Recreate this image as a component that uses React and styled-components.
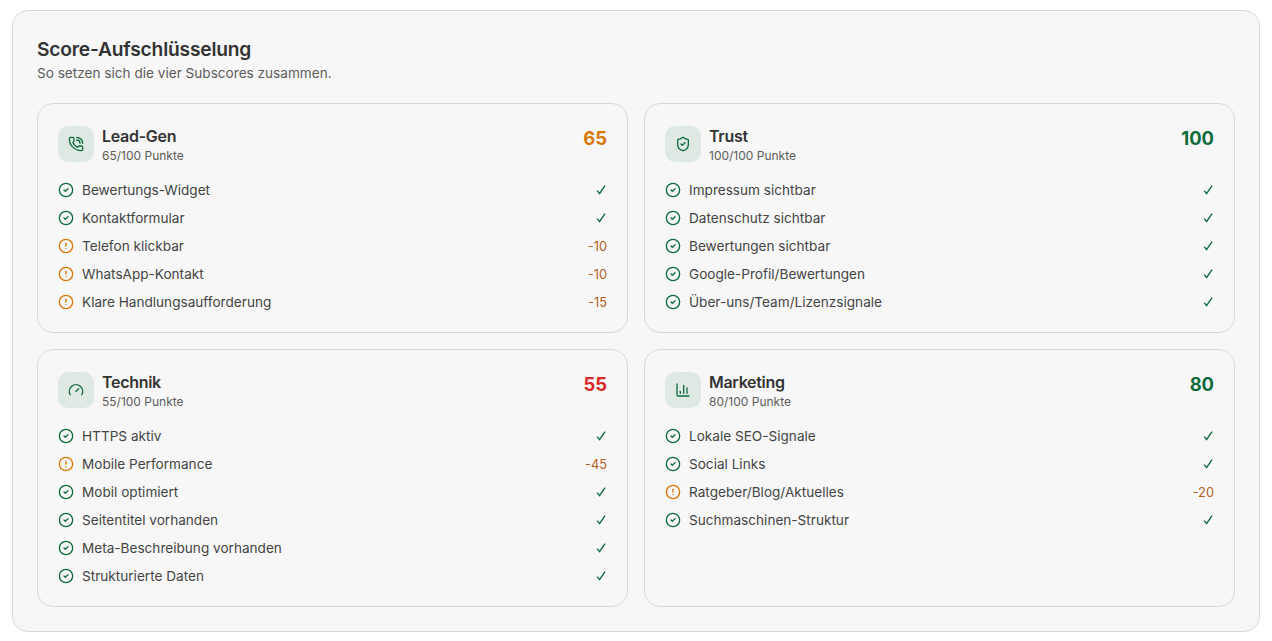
import React from "react";
import styled, { createGlobalStyle } from "styled-components";
import { ChartColumn, CircleAlert, CircleCheck, Gauge, PhoneCall, ShieldCheck } from "lucide-react";

const GREEN = "#0f6b3c";
const ORANGE = "#d97706";

const sections = [
  {
    name: "Lead-Gen",
    score: 65,
    color: ORANGE,
    icon: PhoneCall,
    items: [
      ["Bewertungs-Widget"],
      ["Kontaktformular"],
      ["Telefon klickbar", -10],
      ["WhatsApp-Kontakt", -10],
      ["Klare Handlungsaufforderung", -15],
    ],
  },
  {
    name: "Trust",
    score: 100,
    color: GREEN,
    icon: ShieldCheck,
    items: [
      ["Impressum sichtbar"],
      ["Datenschutz sichtbar"],
      ["Bewertungen sichtbar"],
      ["Google-Profil/Bewertungen"],
      ["Über-uns/Team/Lizenzsignale"],
    ],
  },
  {
    name: "Technik",
    score: 55,
    color: "#dc2626",
    icon: Gauge,
    items: [
      ["HTTPS aktiv"],
      ["Mobile Performance", -45],
      ["Mobil optimiert"],
      ["Seitentitel vorhanden"],
      ["Meta-Beschreibung vorhanden"],
      ["Strukturierte Daten"],
    ],
  },
  {
    name: "Marketing",
    score: 80,
    color: GREEN,
    icon: ChartColumn,
    items: [
      ["Lokale SEO-Signale"],
      ["Social Links"],
      ["Ratgeber/Blog/Aktuelles", -20],
      ["Suchmaschinen-Struktur"],
    ],
  },
];

const TickMark = () => (
  <svg width="12" height="12" viewBox="0 0 12 12" fill="none" stroke="currentColor" strokeWidth="1.4">
    <path d="M2.2 6.6 4.6 9.6 10 1.6" />
  </svg>
);

export default function App() {
  return (
    <>
      <GlobalStyle />
      <Panel>
        <Title>Score-Aufschlüsselung</Title>
        <Subtitle>So setzen sich die vier Subscores zusammen.</Subtitle>
        <Grid>
          {sections.map((section) => {
            const Icon = section.icon;
            return (
              <Card key={section.name}>
                <CardHeader>
                  <IconBox>
                    <Icon size={16} strokeWidth={2} />
                  </IconBox>
                  <Heading>
                    <CardName>{section.name}</CardName>
                    <Points>{section.score}/100 Punkte</Points>
                  </Heading>
                  <Score $color={section.color}>{section.score}</Score>
                </CardHeader>
                <List>
                  {section.items.map(([label, penalty]) => (
                    <Row key={label}>
                      <RowIcon $warn={penalty !== undefined}>
                        {penalty !== undefined ? (
                          <CircleAlert size={16} strokeWidth={2} />
                        ) : (
                          <CircleCheck size={16} strokeWidth={2} />
                        )}
                      </RowIcon>
                      <Label>{label}</Label>
                      {penalty !== undefined ? (
                        <Penalty>{penalty}</Penalty>
                      ) : (
                        <Tick>
                          <TickMark />
                        </Tick>
                      )}
                    </Row>
                  ))}
                </List>
              </Card>
            );
          })}
        </Grid>
      </Panel>
    </>
  );
}

const GlobalStyle = createGlobalStyle`
  html, body {
    margin: 0;
    background: #ffffff;
    font-family: Inter, "Liberation Sans", sans-serif;
    -webkit-font-smoothing: antialiased;
  }
`;
const Panel = styled.section`
  box-sizing: border-box;
  width: 1248px;
  height: 622px;
  margin: 10px 12px 0;
  padding: 24px;
  background: #f7f7f7;
  border: 1px solid #d9d9d9;
  border-radius: 16px;
`;
const Title = styled.h2`
  margin: 0;
  font-size: 19.2px;
  line-height: 28px;
  font-weight: 600;
  letter-spacing: -0.19px;
  color: #333333;
`;
const Subtitle = styled.p`
  margin: 0;
  font-size: 13.6px;
  line-height: 20px;
  color: #5c5c5c;
`;
const Grid = styled.div`
  display: grid;
  grid-template-columns: 1fr 1fr;
  gap: 16px;
  margin-top: 20px;
`;
const Card = styled.article`
  box-sizing: border-box;
  padding: 22px 20px 16px;
  background: #f7f7f7;
  border: 1px solid #d9d9d9;
  border-radius: 16px;
`;
const CardHeader = styled.header`
  display: flex;
  align-items: flex-start;
  gap: 8px;
  height: 36px;
  margin-bottom: 14px;
`;
const IconBox = styled.div`
  display: flex;
  flex: none;
  align-items: center;
  justify-content: center;
  width: 36px;
  height: 36px;
  border-radius: 10px;
  background: #dfe9e3;
  color: ${GREEN};
`;
const Heading = styled.div`
  flex: 1;
`;
const CardName = styled.div`
  font-size: 16px;
  line-height: 20px;
  font-weight: 600;
  letter-spacing: -0.3px;
  color: #333333;
`;
const Points = styled.div`
  margin-top: 1px;
  font-size: 12px;
  line-height: 18px;
  color: #5c5c5c;
`;
const Score = styled.div`
  font-size: 18.4px;
  line-height: 24px;
  font-weight: 700;
  color: ${(props) => props.$color};
`;
const List = styled.ul`
  margin: 0;
  padding: 0;
  list-style: none;
`;
const Row = styled.li`
  display: flex;
  align-items: center;
  height: 28px;
`;
const RowIcon = styled.span`
  display: flex;
  margin-right: 8px;
  color: ${(props) => (props.$warn ? ORANGE : GREEN)};
`;
const Label = styled.span`
  flex: 1;
  font-size: 13.6px;
  color: #444444;
`;
const Penalty = styled.span`
  font-size: 12.8px;
  color: #b45f1e;
`;
const Tick = styled.span`
  display: flex;
  color: ${GREEN};
`;
